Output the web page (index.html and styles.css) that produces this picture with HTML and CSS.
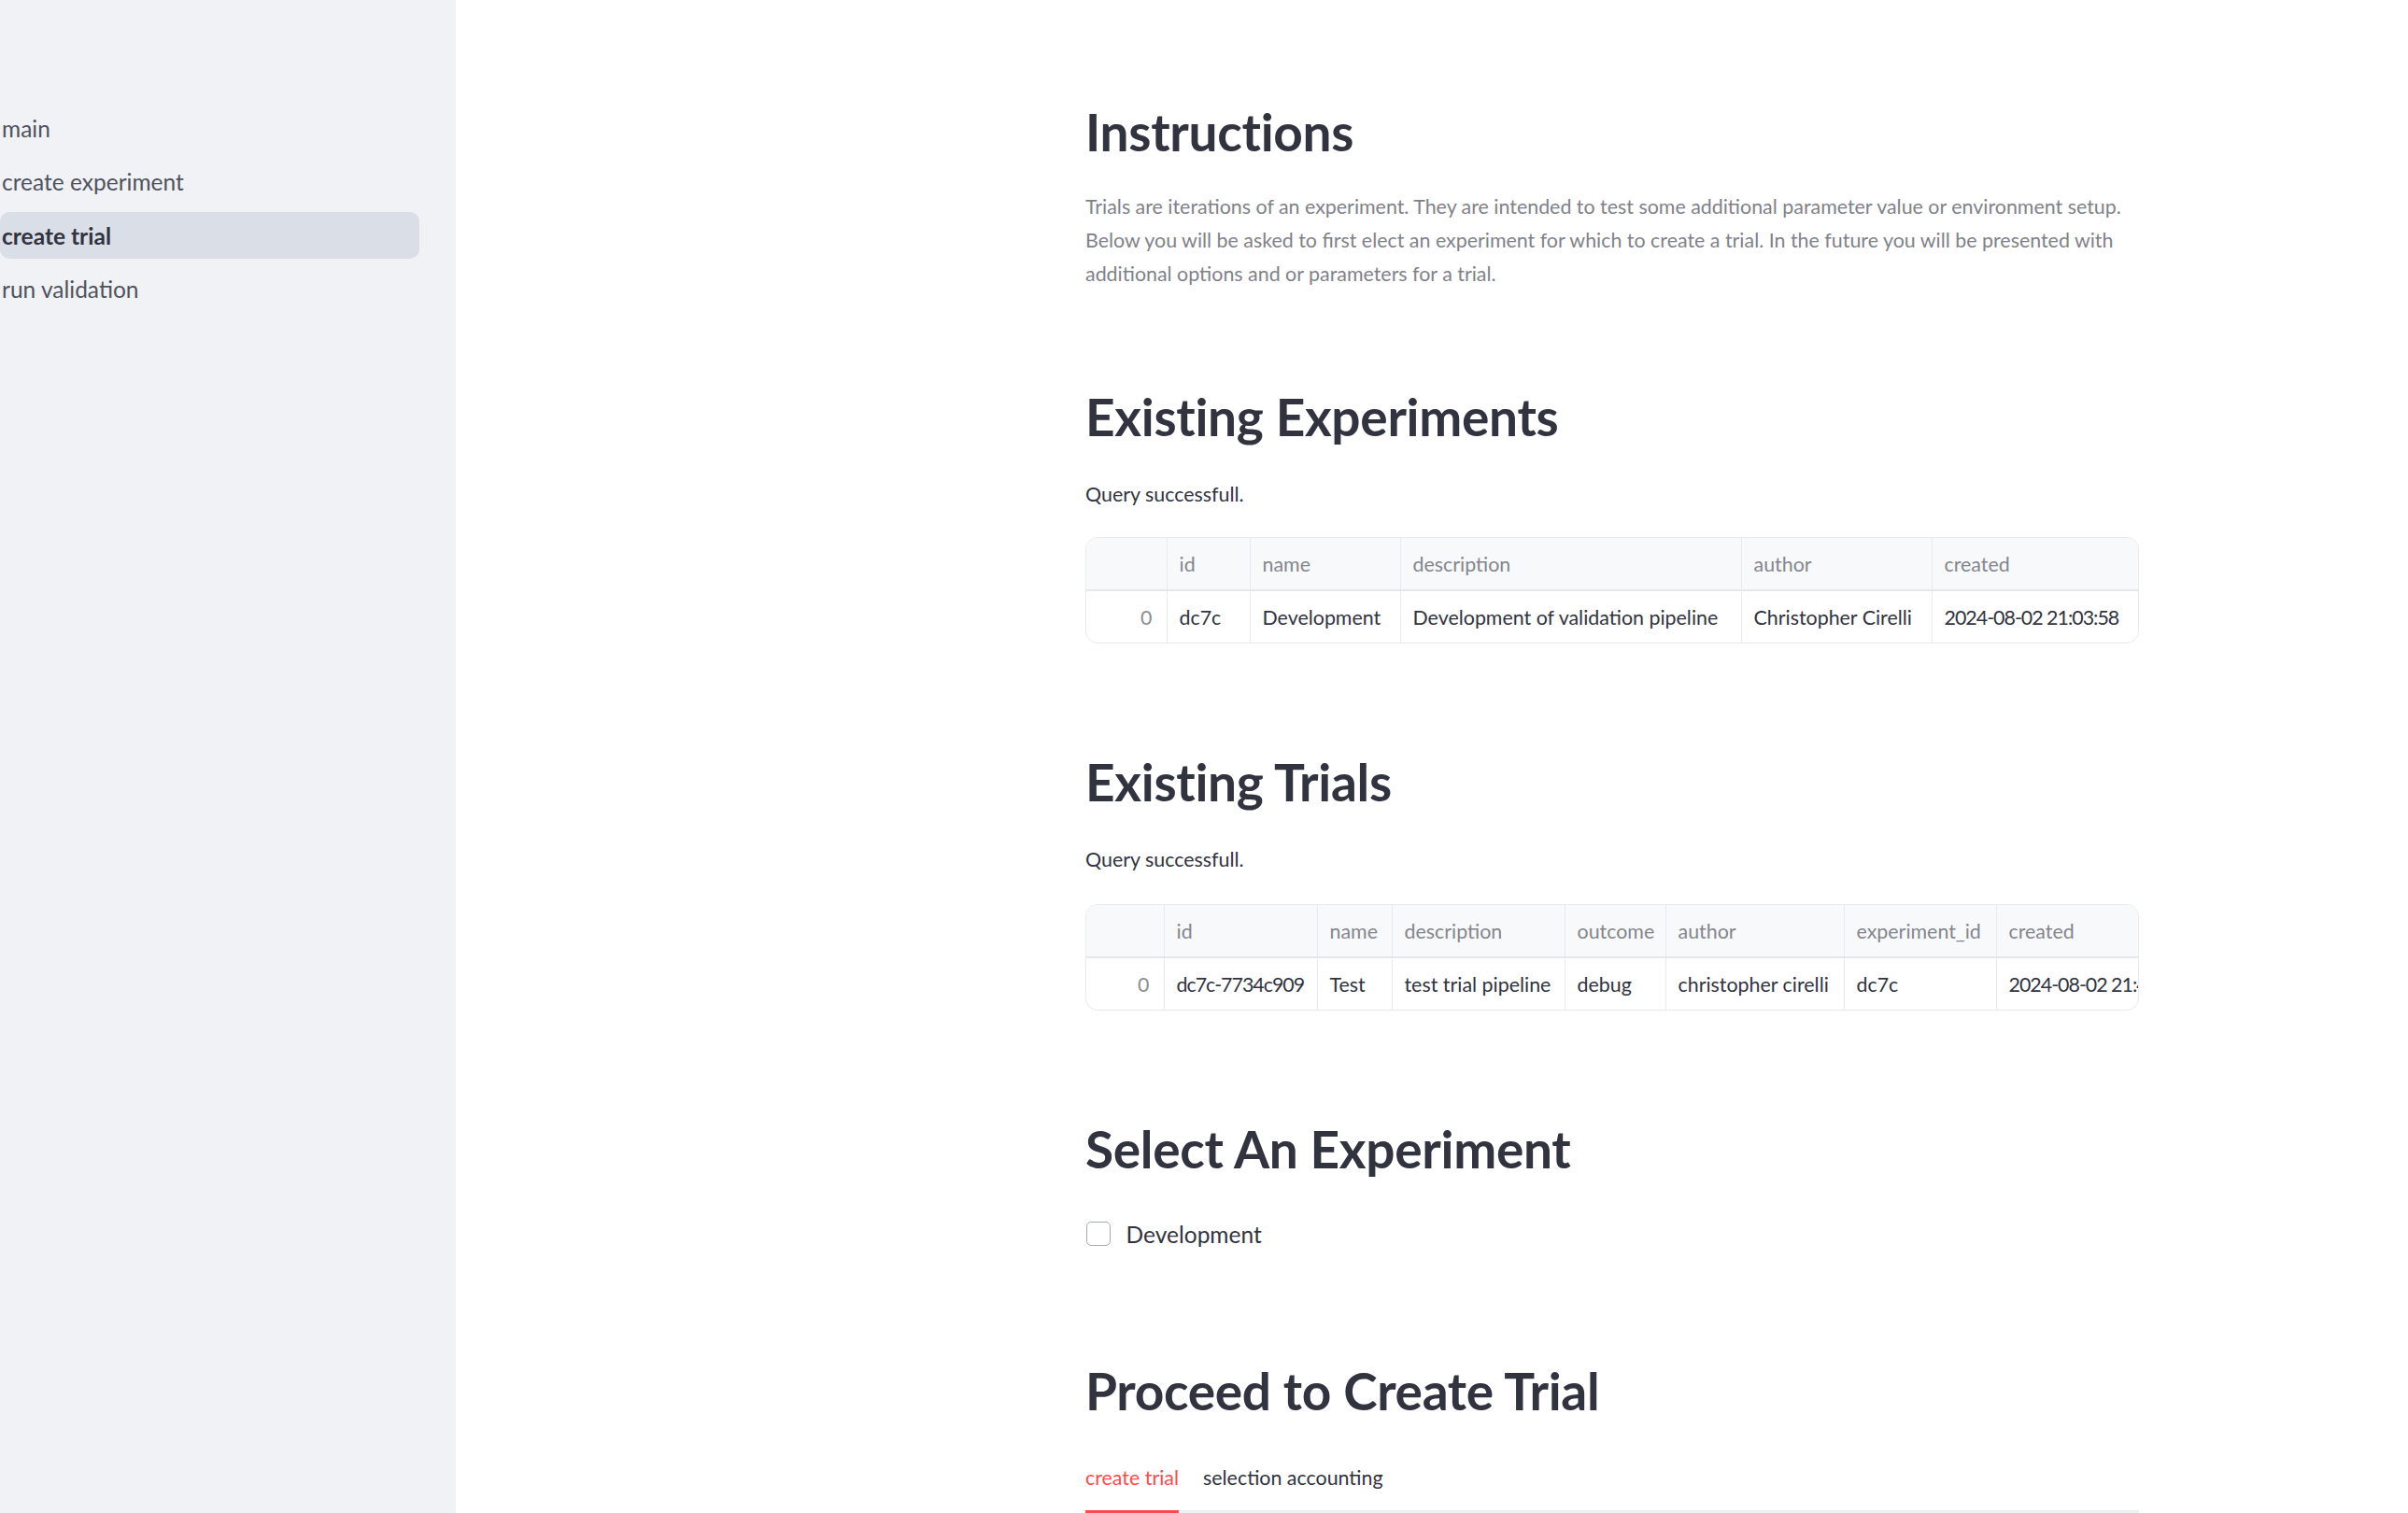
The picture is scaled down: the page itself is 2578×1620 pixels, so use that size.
FILE: index.html
```html
<!DOCTYPE html>
<html lang="en">
<head>
<meta charset="utf-8">
<title>create trial</title>
<link rel="stylesheet" href="styles.css">
</head>
<body>
<div class="app">
  <aside class="sidebar">
    <nav class="nav">
      <a class="nav-item">main</a>
      <a class="nav-item">create experiment</a>
      <a class="nav-item active">create trial</a>
      <a class="nav-item">run validation</a>
    </nav>
  </aside>
  <main class="main">
    <div class="block">
      <h2 class="h h-first">Instructions</h2>
      <p class="caption">Trials are iterations of an experiment. They are intended to test some additional parameter value or environment setup. Below you will be asked to first elect an experiment for which to create a trial. In the future you will be presented with additional options and or parameters for a trial.</p>

      <h2 class="h h-after-caption">Existing Experiments</h2>
      <p class="status">Query successfull.</p>
      <div class="grid">
        <table class="df df-exp">
          <colgroup>
            <col style="width:86px"><col style="width:89px"><col style="width:161px"><col style="width:365px"><col style="width:204px"><col style="width:223px">
          </colgroup>
          <thead>
            <tr><th></th><th>id</th><th>name</th><th>description</th><th>author</th><th>created</th></tr>
          </thead>
          <tbody>
            <tr><td class="idx">0</td><td>dc7c</td><td>Development</td><td>Development of validation pipeline</td><td>Christopher Cirelli</td><td class="num">2024-08-02 21:03:58</td></tr>
          </tbody>
        </table>
      </div>

      <h2 class="h h-after-table">Existing Trials</h2>
      <p class="status">Query successfull.</p>
      <div class="grid grid-trials">
        <table class="df df-trials">
          <colgroup>
            <col style="width:83px"><col style="width:164px"><col style="width:80px"><col style="width:185px"><col style="width:108px"><col style="width:191px"><col style="width:163px"><col style="width:220px">
          </colgroup>
          <thead>
            <tr><th></th><th>id</th><th>name</th><th>description</th><th>outcome</th><th>author</th><th>experiment_id</th><th>created</th></tr>
          </thead>
          <tbody>
            <tr><td class="idx">0</td><td class="num">dc7c-7734c909</td><td>Test</td><td>test trial pipeline</td><td>debug</td><td>christopher cirelli</td><td>dc7c</td><td class="num">2024-08-02 21:45:12</td></tr>
          </tbody>
        </table>
      </div>

      <h2 class="h h-after-table">Select An Experiment</h2>
      <label class="check">
        <span class="box"></span>
        <span class="check-label">Development</span>
      </label>

      <h2 class="h h-after-check">Proceed to Create Trial</h2>
      <div class="tabs">
        <button class="tab tab-active">create trial</button>
        <button class="tab">selection accounting</button>
      </div>
    </div>
  </main>
</div>
</body>
</html>
```

FILE: styles.css
```css
* { box-sizing: border-box; }

html, body {
  margin: 0;
  padding: 0;
  background: #ffffff;
  overflow: hidden;
}

body {
  font-family: "Lato", "Noto Sans", sans-serif;
  color: #31333f;
}

.app {
  display: flex;
  min-height: 1620px;
}

.sidebar {
  flex: 0 0 488px;
  background: #f0f2f6;
  min-height: 1620px;
}

.nav {
  display: flex;
  flex-direction: column;
  gap: 7.5px;
  padding-top: 112px;
  width: 449px;
}

.nav-item {
  display: flex;
  align-items: center;
  height: 50px;
  padding-left: 2px;
  font-size: 24.5px;
  color: #4f525d;
  border-radius: 10px;
  text-decoration: none;
}

.nav-item.active {
  background: #dadee7;
  color: #31333f;
  font-weight: 700;
}

.main {
  flex: 1;
  padding-left: 674px;
}

.block {
  width: 1128px;
}

.h {
  margin: 0;
  font-size: 55px;
  line-height: 69px;
  font-weight: 700;
  color: #31333f;
  letter-spacing: -0.3px;
}

.h-first { margin-top: 107px; }
.h-after-caption { margin-top: 101px; }
.h-after-table { margin-top: 114px; }
.h-after-check { margin-top: 114px; }

.caption {
  margin: 27px 0 0;
  font-size: 21.4px;
  line-height: 36px;
  color: #808289;
}

.status {
  margin: 30px 0 0;
  font-size: 21.4px;
  line-height: 36px;
  color: #31333f;
}

.grid {
  margin-top: 28px;
  width: 1128px;
  border: 1.5px solid #e9eaed;
  border-radius: 13px;
  overflow: hidden;
}

.grid-trials { margin-top: 30px; }

.df {
  border-collapse: collapse;
  table-layout: fixed;
  font-size: 21.4px;
}

.df-exp { width: 100%; }
.df-trials { width: 1194px; }

.df th, .df td {
  height: 56px;
  padding: 0 13px;
  text-align: left;
  white-space: nowrap;
  overflow: hidden;
  border-left: 1.5px solid #e9eaed;
}

.df th:first-child, .df td:first-child { border-left: none; }

.df th {
  background: #f8f9fb;
  color: #84868d;
  font-weight: 400;
  border-bottom: 2.5px solid #e6e7eb;
}

.df td { color: #31333f; }

.df td.num { letter-spacing: -1px; }

.df td.idx {
  text-align: right;
  color: #8b8d94;
  padding-right: 15px;
}

.check {
  display: flex;
  align-items: center;
  margin-top: 36px;
  height: 40px;
}

.box {
  width: 25.6px;
  height: 25.6px;
  border: 1.6px solid #a7abb4;
  border-radius: 5px;
  margin-left: 1px;
  background: #fff;
}

.check-label {
  margin-left: 17px;
  font-size: 24.5px;
  color: #31333f;
}

.tabs {
  display: flex;
  gap: 26px;
  margin-top: 40px;
  border-bottom: 3.2px solid #eeeff2;
  height: 56px;
  align-items: flex-start;
}

.tab {
  font-family: inherit;
  font-size: 21.4px;
  line-height: 36px;
  padding: 0 0 17px;
  margin: 0 0 -3.2px;
  background: none;
  border: none;
  border-bottom: 3.2px solid transparent;
  color: #31333f;
  cursor: pointer;
}

.tab-active {
  color: #ff4b4b;
  border-bottom-color: #ff4b4b;
}
```
